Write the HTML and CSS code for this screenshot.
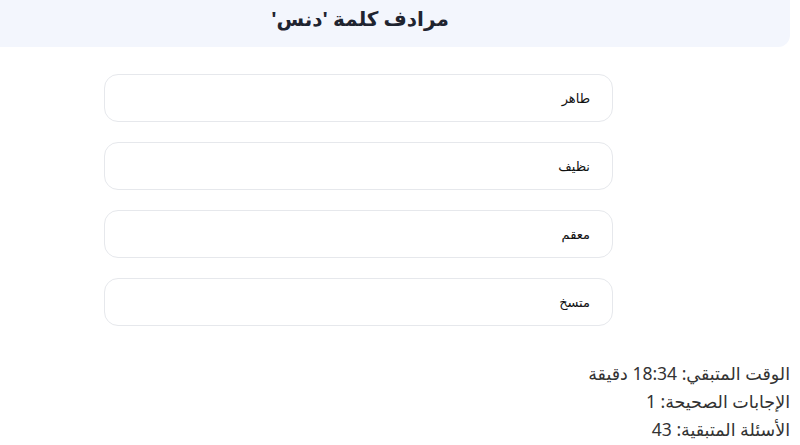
FILE: index.html
```html
<!DOCTYPE html>
<html lang="ar" dir="rtl">
<head>
<meta charset="utf-8">
<link rel="stylesheet" href="styles.css">
</head>
<body>
<div class="page">
  <header class="head">
    <h1 class="title">مرادف كلمة 'دنس'</h1>
  </header>
  <div class="options">
    <button class="opt">طاهر</button>
    <button class="opt">نظيف</button>
    <button class="opt">معقم</button>
    <button class="opt">متسخ</button>
  </div>
  <div class="stats">
    <p class="stat">الوقت المتبقي: 18:34 دقيقة</p>
    <p class="stat">الإجابات الصحيحة: 1</p>
    <p class="stat">الأسئلة المتبقية: 43</p>
  </div>
</div>
</body>
</html>
```
FILE: styles.css
```css
html, body {
  margin: 0;
  padding: 0;
  background: #ffffff;
}
body {
  width: 800px;
  height: 445px;
  overflow: hidden;
  font-family: "Noto Sans", "DejaVu Sans", sans-serif;
}
.page {
  padding-right: 10px;
}
.head {
  background: #f3f6fd;
  height: 47px;
  border-bottom-right-radius: 12px;
  display: flex;
  justify-content: center;
  align-items: center;
  padding-right: 70px;
}
.title {
  margin: 0;
  font-size: 20px;
  font-weight: 700;
  color: #1f2430;
  padding-bottom: 10px;
}
.options {
  display: flex;
  flex-direction: column;
  gap: 20px;
  width: 509px;
  margin: 27px 177px 0 0;
}
.opt {
  height: 48px;
  border: 1.5px solid #e6e8ec;
  border-radius: 14px;
  background: #fff;
  text-align: right;
  padding: 0 22px;
  font-family: "DejaVu Sans", sans-serif;
  font-size: 13px;
  color: #111;
}
.stats {
  margin-top: 33px;
}
.stat {
  margin: 0;
  font-size: 17.5px;
  line-height: 28px;
  color: #333;
}
```
